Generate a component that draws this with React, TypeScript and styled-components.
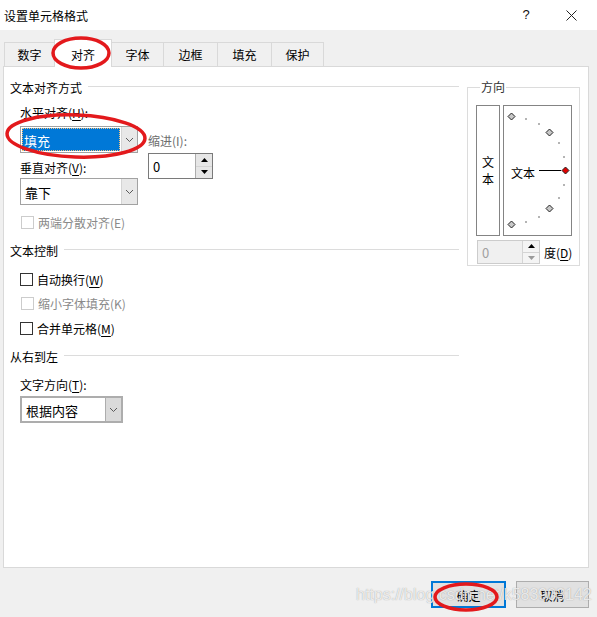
import styled, { createGlobalStyle } from 'styled-components';

const GlobalStyle = createGlobalStyle`
  html, body {
    margin: 0;
    padding: 0;
    background: #f0f0f0;
  }
  body {
    font-family: "Noto Sans CJK SC", "Noto Sans", sans-serif;
    font-size: 12px;
    color: #000;
  }
  * {
    box-sizing: border-box;
  }
`;

const Window = styled.div`
  position: relative;
  width: 597px;
  height: 617px;
  background: #f0f0f0;
  overflow: hidden;
`;

const TitleBar = styled.div`
  height: 30px;
  background: #fff;
  display: flex;
  align-items: center;
  padding-left: 4px;
  font-size: 12px;
  line-height: 16px;
`;

const Title = styled.div`
  flex: 1;
  padding-top: 1px;
`;

const HelpButton = styled.div`
  width: 44px;
  text-align: center;
  font-family: "Liberation Sans", Arial, sans-serif;
  font-size: 13px;
  color: #111;
  margin-right: 1px;
`;

const CloseButton = styled.div`
  width: 45px;
  height: 30px;
  display: flex;
  align-items: center;
  justify-content: center;
  margin-right: 3px;
`;

const TabRow = styled.div`
  display: flex;
  align-items: flex-end;
  height: 28px;
  margin-top: 9px;
  padding-left: 4px;
  margin-bottom: -1px;
  position: relative;
  z-index: 1;
`;

const Tab = styled.div<{ $w: number; $active?: boolean }>`
  width: ${(p) => p.$w}px;
  height: ${(p) => (p.$active ? 28 : 25)}px;
  margin-left: -1px;
  border: 1px solid #d9d9d9;
  border-bottom: ${(p) => (p.$active ? 'none' : '1px solid #d9d9d9')};
  background: ${(p) => (p.$active ? '#fff' : '#f0f0f0')};
  display: flex;
  align-items: center;
  justify-content: center;
  padding-top: ${(p) => (p.$active ? 1 : 0)}px;
  position: relative;
  z-index: ${(p) => (p.$active ? 2 : 1)};
  &:first-child {
    margin-left: 0;
  }
`;

const Panel = styled.div`
  margin-left: 3px;
  width: 586px;
  height: 502px;
  background: #fff;
  border: 1px solid #d9d9d9;
  display: flex;
  padding-left: 6px;
`;

const LeftColumn = styled.div`
  width: 449px;
  padding-top: 13px;
  display: flex;
  flex-direction: column;
`;

const SectionHeader = styled.div<{ $mt?: number }>`
  display: flex;
  align-items: center;
  height: 16px;
  line-height: 16px;
  margin-top: ${(p) => p.$mt ?? 0}px;
`;

const SectionLine = styled.div`
  flex: 1;
  height: 1px;
  background: #dcdcdc;
  margin-left: 6px;
  margin-top: -3px;
`;

const Indent = styled.div`
  padding-left: 10px;
  display: flex;
  flex-direction: column;
`;

const Label = styled.div<{ $mt?: number; $disabled?: boolean }>`
  height: 16px;
  line-height: 16px;
  margin-top: ${(p) => p.$mt ?? 0}px;
  color: ${(p) => (p.$disabled ? '#6d6d6d' : '#000')};
  white-space: nowrap;
`;

const Key = styled.span`
  text-decoration: underline;
  text-underline-offset: 2px;
`;

const AlignRow = styled.div`
  display: flex;
  margin-top: 9px;
`;

const Stack = styled.div<{ $pt?: number; $ml?: number }>`
  display: flex;
  flex-direction: column;
  padding-top: ${(p) => p.$pt ?? 0}px;
  margin-left: ${(p) => p.$ml ?? 0}px;
`;

const Combo = styled.div<{ $w: number; $mt?: number; $hot?: boolean }>`
  width: ${(p) => p.$w}px;
  height: 27px;
  margin-top: ${(p) => p.$mt ?? 0}px;
  border: ${(p) => (p.$hot ? '2px solid #adadad' : '1px solid #a2a2a2')};
  background: #fff;
  display: flex;
`;

const ComboValue = styled.div`
  flex: 1;
  padding: 1px;
  display: flex;
`;

const ComboText = styled.div<{ $selected?: boolean }>`
  flex: 1;
  display: flex;
  align-items: center;
  padding-left: ${(p) => (p.$selected ? 2 : 3)}px;
  padding-top: 1px;
  background: ${(p) => (p.$selected ? '#0078d7' : 'transparent')};
  color: ${(p) => (p.$selected ? '#fff' : '#000')};
  outline: ${(p) => (p.$selected ? '1px dotted #f6c07a' : 'none')};
  outline-offset: -1px;
  font-size: 13px;
`;

const ComboArrow = styled.div<{ $hot?: boolean }>`
  width: 16px;
  border-left: 1px solid ${(p) => (p.$hot ? '#adadad' : '#d4d4d4')};
  background: ${(p) => (p.$hot ? '#dadada' : '#e8e8e8')};
  display: flex;
  align-items: center;
  justify-content: center;
`;

const Spinner = styled.div<{ $w: number; $mt?: number; $disabled?: boolean }>`
  width: ${(p) => p.$w}px;
  flex-shrink: 0;
  height: ${(p) => (p.$disabled ? 24 : 26)}px;
  margin-top: ${(p) => p.$mt ?? 0}px;
  border: 1px solid ${(p) => (p.$disabled ? '#cccccc' : '#7a7a7a')};
  background: ${(p) => (p.$disabled ? '#f0f0f0' : '#fff')};
  color: ${(p) => (p.$disabled ? '#a0a0a0' : '#000')};
  display: flex;
`;

const SpinValue = styled.div`
  flex: 1;
  padding-left: 4px;
  display: flex;
  align-items: center;
  font-size: 13px;
`;

const SpinButtons = styled.div<{ $disabled?: boolean }>`
  width: 17px;
  display: flex;
  flex-direction: column;
  border-left: 1px solid ${(p) => (p.$disabled ? '#d4d4d4' : '#adadad')};
`;

const SpinHalf = styled.div<{ $disabled?: boolean }>`
  flex: 1;
  background: ${(p) => (p.$disabled ? '#f4f4f4' : '#e6e6e6')};
  display: flex;
  align-items: center;
  justify-content: center;
  & + & {
    border-top: 1px solid ${(p) => (p.$disabled ? '#d4d4d4' : '#adadad')};
  }
`;

const CheckRow = styled.div<{ $mt?: number; $disabled?: boolean }>`
  display: flex;
  align-items: center;
  height: 16px;
  margin-top: ${(p) => p.$mt ?? 0}px;
  color: ${(p) => (p.$disabled ? '#8a8a8a' : '#000')};
`;

const Box = styled.div<{ $disabled?: boolean }>`
  width: 13px;
  height: 13px;
  border: 1px solid ${(p) => (p.$disabled ? '#cccccc' : '#333333')};
  background: #fff;
  margin-right: 4px;
  margin-left: ${(p) => (p.$disabled ? 1 : 0)}px;
`;

const RightColumn = styled.div`
  margin-left: 8px;
  padding-top: 20px;
`;

const GroupBox = styled.div`
  width: 113px;
  height: 179px;
  border: 1px solid #dcdcdc;
  padding: 0 7px 0 8px;
`;

const Legend = styled.div`
  width: fit-content;
  margin: -9px 0 0 4px;
  padding: 0 1px;
  background: #fff;
  line-height: 16px;
  color: #333;
`;

const OrientRow = styled.div`
  display: flex;
  gap: 3px;
  margin-top: 10px;
`;

const VerticalBox = styled.div`
  width: 24px;
  height: 131px;
  border: 1px solid #848484;
  display: flex;
  flex-direction: column;
  align-items: center;
  justify-content: center;
  line-height: 17px;
  font-size: 12px;
  padding-bottom: 2px;
`;

const DialBox = styled.div`
  width: 69px;
  height: 131px;
  border: 1px solid #848484;
`;

const DegreeRow = styled.div`
  display: flex;
  align-items: center;
  margin-top: 4px;
  margin-left: 1px;
  gap: 4px;
  white-space: nowrap;
`;

const Footer = styled.div`
  display: flex;
  justify-content: flex-end;
  gap: 10px;
  margin-top: 13px;
  padding-right: 8px;
`;

const DialogButton = styled.div<{ $w: number; $default?: boolean }>`
  width: ${(p) => p.$w}px;
  height: 27px;
  border: ${(p) => (p.$default ? '2px solid #0078d7' : '1px solid #adadad')};
  background: #e1e1e1;
  display: flex;
  align-items: center;
  justify-content: center;
  padding-top: 1px;
`;

const Annotations = styled.svg`
  position: absolute;
  left: 0;
  top: 0;
  pointer-events: none;
  z-index: 5;
`;

const Watermark = styled.div`
  position: absolute;
  left: 356px;
  top: 586px;
  font-family: "Liberation Sans", Arial, sans-serif;
  font-size: 16px;
  white-space: nowrap;
  color: rgba(255, 255, 255, 0.8);
  text-shadow: 0 0 1px rgba(110, 110, 110, 0.7);
  pointer-events: none;
  z-index: 4;
`;

const Chevron = () => (
  <svg width="9" height="6" viewBox="0 0 9 6">
    <polyline points="1,1 4.5,4.5 8,1" fill="none" stroke="#5a5a5a" strokeWidth="1" />
  </svg>
);

const Tri = ({ up, color = '#000' }: { up?: boolean; color?: string }) => (
  <svg width="7" height="4" viewBox="0 0 7 4">
    <polygon points={up ? '0,4 7,4 3.5,0' : '0,0 7,0 3.5,4'} fill={color} />
  </svg>
);

const Dropdown = ({
  value,
  width,
  mt,
  selected,
  hot,
}: {
  value: string;
  width: number;
  mt?: number;
  selected?: boolean;
  hot?: boolean;
}) => (
  <Combo $w={width} $mt={mt} $hot={hot}>
    <ComboValue>
      <ComboText $selected={selected}>{value}</ComboText>
    </ComboValue>
    <ComboArrow $hot={hot}>
      <Chevron />
    </ComboArrow>
  </Combo>
);

const Diamond = ({ x, y, fill }: { x: number; y: number; fill: string }) => (
  <polygon
    points={`${x},${y - 3.5} ${x + 3.5},${y} ${x},${y + 3.5} ${x - 3.5},${y}`}
    fill={fill}
    stroke="#222"
    strokeWidth="1"
  />
);

const dots: [number, number][] = [
  [22, 13], [35, 18], [55, 37], [60, 51], [60, 79], [55, 92], [35, 111], [22, 116],
];

const Dial = () => (
  <svg width="67" height="129" viewBox="0 0 67 129">
    {dots.map(([x, y]) => (
      <rect key={`${x}-${y}`} x={x - 1} y={y - 1} width="2" height="2" fill="#b4b4b4" />
    ))}
    <Diamond x={7.5} y={10.5} fill="#c8c8c8" />
    <Diamond x={45.5} y={26.5} fill="#c8c8c8" />
    <Diamond x={45.5} y={102.5} fill="#c8c8c8" />
    <Diamond x={7.5} y={118.5} fill="#c8c8c8" />
    <line x1="35" y1="64.5" x2="57" y2="64.5" stroke="#000" strokeWidth="1" />
    <Diamond x={61.5} y={64.5} fill="#e00000" />
    <text
      x="7"
      y="72"
      fontSize="12"
      fontFamily='"Noto Sans CJK SC", sans-serif'
      fill="#000"
    >
      文本
    </text>
  </svg>
);

export default function App() {
  return (
    <>
      <GlobalStyle />
      <Window>
        <TitleBar>
          <Title>设置单元格格式</Title>
          <HelpButton>?</HelpButton>
          <CloseButton>
            <svg width="11" height="11" viewBox="0 0 11 11">
              <path d="M0.5 0.5 L10.5 10.5 M10.5 0.5 L0.5 10.5" stroke="#222" strokeWidth="1" />
            </svg>
          </CloseButton>
        </TitleBar>

        <TabRow>
          <Tab $w={51}>数字</Tab>
          <Tab $w={58} $active>对齐</Tab>
          <Tab $w={53}>字体</Tab>
          <Tab $w={55}>边框</Tab>
          <Tab $w={55}>填充</Tab>
          <Tab $w={53}>保护</Tab>
        </TabRow>

        <Panel>
          <LeftColumn>
            <SectionHeader>
              文本对齐方式
              <SectionLine />
            </SectionHeader>
            <Indent>
              <AlignRow>
                <Stack>
                  <Label>
                    水平对齐(<Key>H</Key>):
                  </Label>
                  <Dropdown value="填充" width={118} mt={5} selected />
                  <Label $mt={7}>
                    垂直对齐(<Key>V</Key>):
                  </Label>
                  <Dropdown value="靠下" width={118} mt={2} />
                </Stack>
                <Stack $pt={28} $ml={10}>
                  <Label $disabled>缩进(I):</Label>
                  <Spinner $w={65} $mt={4}>
                    <SpinValue>0</SpinValue>
                    <SpinButtons>
                      <SpinHalf>
                        <Tri up />
                      </SpinHalf>
                      <SpinHalf>
                        <Tri />
                      </SpinHalf>
                    </SpinButtons>
                  </Spinner>
                </Stack>
              </AlignRow>
              <CheckRow $mt={9} $disabled>
                <Box $disabled />
                两端分散对齐(E)
              </CheckRow>
            </Indent>

            <SectionHeader $mt={13}>
              文本控制
              <SectionLine />
            </SectionHeader>
            <Indent>
              <CheckRow $mt={12}>
                <Box />
                自动换行(<Key>W</Key>)
              </CheckRow>
              <CheckRow $mt={8} $disabled>
                <Box $disabled />
                缩小字体填充(K)
              </CheckRow>
              <CheckRow $mt={9}>
                <Box />
                合并单元格(<Key>M</Key>)
              </CheckRow>
            </Indent>

            <SectionHeader $mt={13}>
              从右到左
              <SectionLine />
            </SectionHeader>
            <Indent>
              <Label $mt={12}>
                文字方向(<Key>T</Key>):
              </Label>
              <Dropdown value="根据内容" width={103} mt={3} hot />
            </Indent>
          </LeftColumn>

          <RightColumn>
            <GroupBox>
              <Legend>方向</Legend>
              <OrientRow>
                <VerticalBox>
                  <span>文</span>
                  <span>本</span>
                </VerticalBox>
                <DialBox>
                  <Dial />
                </DialBox>
              </OrientRow>
              <DegreeRow>
                <Spinner $w={63} $disabled>
                  <SpinValue>0</SpinValue>
                  <SpinButtons $disabled>
                    <SpinHalf $disabled>
                      <Tri up />
                    </SpinHalf>
                    <SpinHalf $disabled>
                      <Tri color="#9a9a9a" />
                    </SpinHalf>
                  </SpinButtons>
                </Spinner>
                <span>
                  度(<Key>D</Key>)
                </span>
              </DegreeRow>
            </GroupBox>
          </RightColumn>
        </Panel>

        <Footer>
          <DialogButton $w={75} $default>
            确定
          </DialogButton>
          <DialogButton $w={73}>取消</DialogButton>
        </Footer>

        <Watermark>https://blog.csdn.net/k583903142</Watermark>

        <Annotations width="597" height="617" viewBox="0 0 597 617">
          <g fill="none" stroke="#e3191c" strokeWidth="3.5">
            <ellipse cx="81" cy="53" rx="28" ry="15" />
            <ellipse cx="76" cy="136" rx="69" ry="21" transform="rotate(2 76 136)" />
            <ellipse cx="466" cy="597" rx="31" ry="13" />
          </g>
        </Annotations>
      </Window>
    </>
  );
}
